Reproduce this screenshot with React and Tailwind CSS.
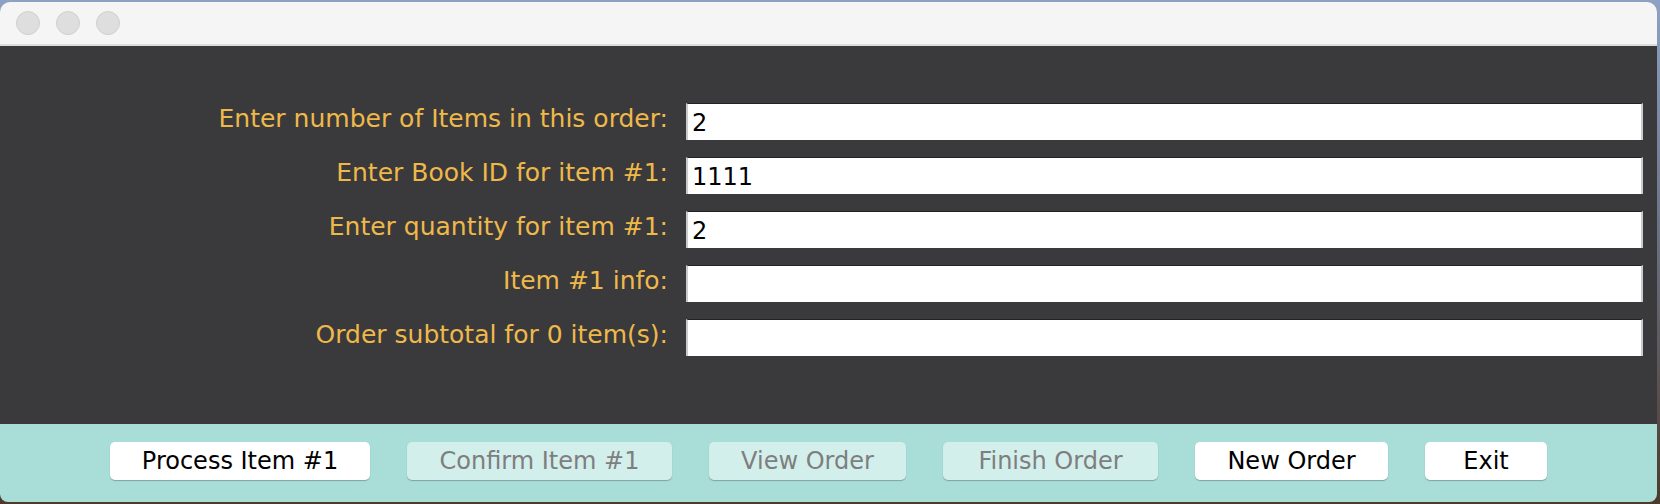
import React from 'react'

const rows = [
  { label: 'Enter number of Items in this order:', value: '2' },
  { label: 'Enter Book ID for item #1:', value: '1111' },
  { label: 'Enter quantity for item #1:', value: '2' },
  { label: 'Item #1 info:', value: '' },
  { label: 'Order subtotal for 0 item(s):', value: '' },
]

const buttons = [
  { text: 'Process Item #1', w: 'w-[260px]', on: true },
  { text: 'Confirm Item #1', w: 'w-[265px]', on: false },
  { text: 'View Order', w: 'w-[197px]', on: false },
  { text: 'Finish Order', w: 'w-[215px]', on: false },
  { text: 'New Order', w: 'w-[193px]', on: true },
  { text: 'Exit', w: 'w-[122px]', on: true },
]

function Light() {
  return <span className="w-[24px] h-[24px] rounded-full bg-[#dedede] border border-[#cfcfcf]" />
}

export default function App() {
  return (
    <div className="w-[1660px] h-[504px] overflow-hidden bg-[linear-gradient(to_bottom,#8da2c2,#6b7386_45%,#4d3a2b)] pt-[2px] font-['DejaVu_Sans',sans-serif]">
      <div className="w-[1657px] h-[500px] flex flex-col rounded-t-[10px] rounded-b-[8px] overflow-hidden">
        {/* title bar */}
        <div className="h-[44px] shrink-0 bg-[#f5f5f5] border-b-2 border-b-[#dcdcdc] flex items-center gap-[16px] pl-[16px]">
          <Light />
          <Light />
          <Light />
        </div>

        {/* form */}
        <div className="h-[378px] shrink-0 bg-[#3a3a3c] pt-[57px]">
          <div className="grid grid-cols-[668px_957px] gap-x-[18px] gap-y-[17px]">
            {rows.map(r => (
              <React.Fragment key={r.label}>
                <div className="h-[37px] flex items-center justify-end pb-[6px] text-[25px] leading-[25px] text-[#efb94a] whitespace-nowrap">
                  {r.label}
                </div>
                <div className="h-[37px] overflow-hidden bg-white border-t border-t-[#222224] border-l-2 border-l-[#cbcbcb] border-r-2 border-r-[#cbcbcb] pl-[4px] text-[24px] leading-[39px] text-black">
                  {r.value}
                </div>
              </React.Fragment>
            ))}
          </div>
        </div>

        {/* buttons */}
        <div className="flex-1 bg-[#a8ddd8] flex justify-center items-start gap-[37px] pt-[18px]">
          {buttons.map(b => (
            <div
              key={b.text}
              className={`${b.w} h-[38px] rounded-[5px] flex items-center justify-center text-[24px] leading-none shadow-[0_1px_1px_rgba(0,0,0,0.25)] ${
                b.on
                  ? 'bg-white text-black'
                  : 'bg-[#d3efec] text-[#7e7e7e]'
              }`}
            >
              {b.text}
            </div>
          ))}
        </div>
      </div>
    </div>
  )
}
